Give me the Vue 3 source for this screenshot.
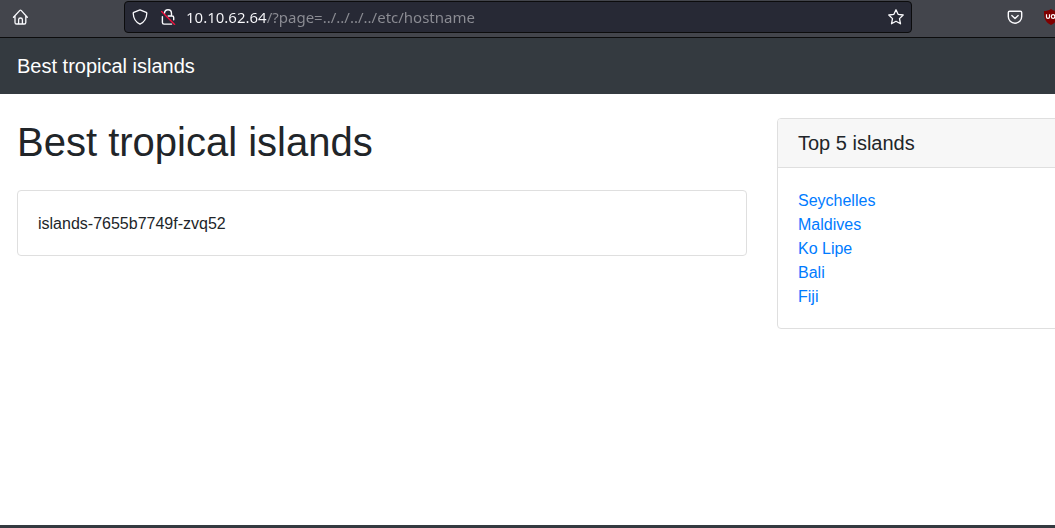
<script setup>
import { ref } from 'vue'

const address = ref('10.10.62.64/?page=../../../../etc/hostname')
const title = 'Best tropical islands'
const hostname = 'islands-7655b7749f-zvq52'
const islands = ['Seychelles', 'Maldives', 'Ko Lipe', 'Bali', 'Fiji']
</script>

<template>
  <div class="window">
    <div class="toolbar">
      <button class="tool" type="button" aria-label="Home">
        <svg viewBox="0 0 16 16" width="16" height="16" fill="none" stroke="currentColor" stroke-width="1.3" stroke-linecap="round" stroke-linejoin="round">
          <path d="M1.5 8.2 7.9 1.4Q8.5 .8 9.1 1.4L15.3 8.2M3 6.9V13.4Q3 15 4.6 15H12.2Q13.8 15 13.8 13.4V6.9M6.6 14.8V10.7Q6.6 9 8.5 9T10.4 10.7V14.8" />
        </svg>
      </button>
      <div class="urlbar">
        <button class="tool" type="button" aria-label="Tracking protection">
          <svg viewBox="0 0 16 16" width="16" height="16" fill="none" stroke="currentColor" stroke-width="1.3" stroke-linejoin="round">
            <path d="M8 .9 14.2 3.4Q14.8 3.7 14.8 4.3C14.6 9 12.9 12.9 8 15.2C3.1 12.9 1.4 9 1.2 4.3Q1.2 3.7 1.8 3.4Z" />
          </svg>
        </button>
        <button class="tool lock" type="button" aria-label="Connection is not secure">
          <svg viewBox="0 0 16 16" width="16" height="16" fill="none" stroke="currentColor" stroke-width="1.4" stroke-linecap="round" stroke-linejoin="round">
            <path d="M4.5 4.2C4.7 2 6.1 .8 8 .8C10.1 .8 11.5 2.3 11.5 4.4V7H12.2Q13.7 7 13.7 8.5V10.8M8.2 7H11.5M2.4 7.6V13.6Q2.4 15.1 3.9 15.1H11.6" />
            <path class="slash" d="M1.6 2.6 14.6 15.4" />
          </svg>
        </button>
        <input v-model="address" class="address" type="text" aria-label="Address" spellcheck="false" />
        <button class="tool" type="button" aria-label="Bookmark this page">
          <svg viewBox="0 0 16 16" width="16" height="16" fill="none" stroke="currentColor" stroke-width="1.3" stroke-linejoin="round">
            <path d="M8 .8 10.1 5.3 15.2 6 11.5 9.6 12.5 14.8 8 12.3 3.5 14.8 4.5 9.6 .8 6 5.9 5.3Z" />
          </svg>
        </button>
      </div>
      <div class="extensions">
        <button class="tool" type="button" aria-label="Save to Pocket">
          <svg viewBox="0 0 16 16" width="16" height="16" fill="none" stroke="currentColor" stroke-width="1.4" stroke-linecap="round" stroke-linejoin="round">
            <path d="M2.7 2.2H13.3Q14.7 2.2 14.7 3.6V7.6C14.7 11.5 11.8 14.2 8 14.2S1.3 11.5 1.3 7.6V3.6Q1.3 2.2 2.7 2.2ZM4.8 6.6 8 9.5 11.2 6.6" />
          </svg>
        </button>
        <button class="tool" type="button" aria-label="uBlock Origin">
          <svg viewBox="0 0 16 16" width="16" height="16" fill="none">
            <path fill="#800000" d="M8 0C5.8 1.6 3.6 2 1 2.1C.7 9.2 2.6 13.4 8 16C13.4 13.4 15.3 9.2 15 2.1C12.4 2 10.2 1.6 8 0Z" />
            <path stroke="#fff" stroke-width="1.2" d="M3.5 5.3V8Q3.5 9.4 5 9.4T6.5 8V5.3" />
            <rect x="8.4" y="5.6" width="3.4" height="3.8" rx="1.7" stroke="#fff" stroke-width="1.2" />
          </svg>
        </button>
      </div>
    </div>

    <header class="navbar">
      <a class="brand" href="#">{{ title }}</a>
    </header>

    <div class="content">
      <main>
        <h1>{{ title }}</h1>
        <div class="card card-body">{{ hostname }}</div>
      </main>
      <aside class="card">
        <h2 class="card-header">Top 5 islands</h2>
        <ul class="card-body">
          <li v-for="island in islands" :key="island">
            <a href="#">{{ island }}</a>
          </li>
        </ul>
      </aside>
    </div>

    <footer></footer>
  </div>
</template>

<style>
body {
  margin: 0;
  background: #fff;
}
</style>

<style scoped>
* {
  box-sizing: border-box;
}

.window {
  display: flex;
  flex-direction: column;
  min-height: 100vh;
  overflow: hidden;
  color: #212529;
  font: 16px/24px "Liberation Sans", Arial, sans-serif;
}

.toolbar {
  display: flex;
  align-items: flex-start;
  height: 38px;
  padding: 1px 0 0 12px;
  border-bottom: 1px solid #0c0c0d;
  background: #43454c;
}

.tool {
  display: flex;
  flex: none;
  align-items: center;
  width: 16px;
  height: 32px;
  padding: 0;
  border: 0;
  background: none;
  color: #fbfbfe;
}

.slash {
  stroke: #f0103c;
}

.urlbar {
  display: flex;
  flex: 1;
  align-items: center;
  height: 32px;
  margin-left: 96px;
  padding: 0 7px;
  border: 1px solid #0c0c0d;
  border-radius: 4px;
  background: #272935;
}

.lock {
  margin-left: 12px;
}

.address {
  flex: 1;
  min-width: 0;
  height: 30px;
  margin: 0 8px 0 10px;
  padding: 0;
  border: 0;
  outline: 0;
  background: linear-gradient(to right, #fbfbfe 81px, #8c8d94 81px);
  -webkit-background-clip: text;
  background-clip: text;
  color: transparent;
  font: 15px/20px "Noto Sans", sans-serif;
}

.extensions {
  display: flex;
  gap: 20px;
  margin: 0 -4px 0 95px;
}

.navbar {
  display: flex;
  align-items: center;
  height: 56px;
  padding: 0 17px;
  background: #343a40;
}

.brand {
  color: #fff;
  font-size: 20px;
  line-height: 30px;
  text-decoration: none;
}

.content {
  display: flex;
  flex: 1;
  align-items: flex-start;
  gap: 30px;
  padding: 24px 0 24px 17px;
}

main {
  flex: 1;
  min-width: 0;
}

h1 {
  margin: 0 0 24px;
  font-size: 40px;
  font-weight: 400;
  line-height: 48px;
}

.card {
  border: 1px solid #dfdfdf;
  border-radius: 4px;
  background: #fff;
}

.card-body {
  margin: 0;
  padding: 21px 20px 19px;
}

.card-header {
  margin: 0;
  padding: 12px 20px;
  border-bottom: 1px solid #dfdfdf;
  border-radius: 3px 3px 0 0;
  background: #f7f7f7;
  font-size: 20px;
  font-weight: 400;
  line-height: 24px;
}

aside {
  flex: none;
  width: 350px;
  margin-right: -72px;
}

ul {
  list-style: none;
}

li a {
  color: #007bff;
  text-decoration: none;
}

footer {
  height: 3px;
  background: #343a40;
}
</style>
